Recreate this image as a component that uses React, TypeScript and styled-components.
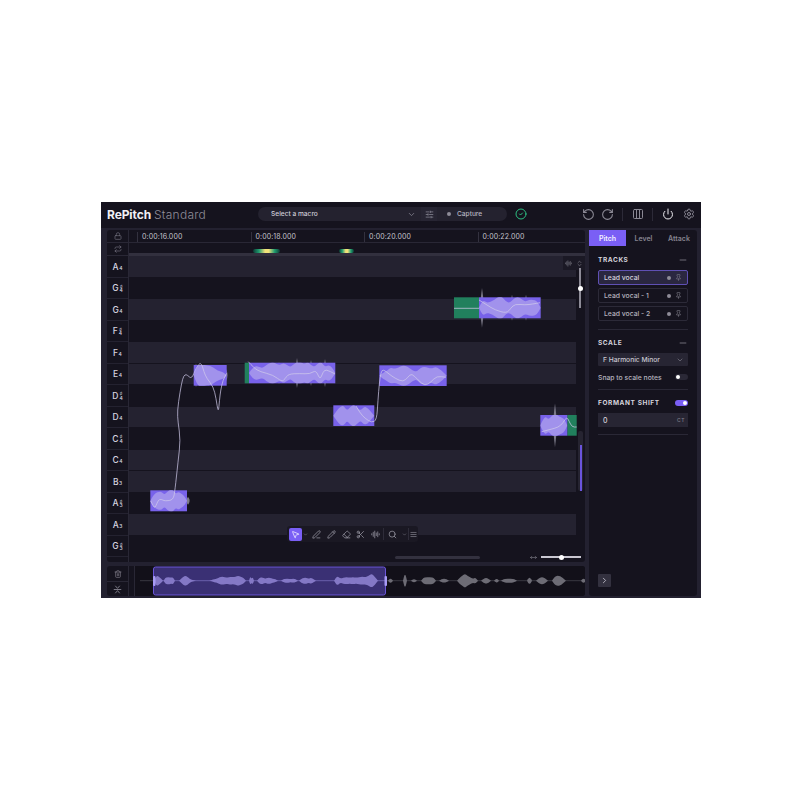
import React from "react";
import styled, { createGlobalStyle } from "styled-components";
import {
  ChevronDown,
  ChevronRight,
  CircleCheck,
  Columns3,
  Eraser,
  Lock,
  Minus,
  MousePointer2,
  MoveHorizontal,
  Pencil,
  PenLine,
  Pin,
  Power,
  Repeat,
  RotateCcw,
  RotateCw,
  Scissors,
  Search,
  Settings,
  SlidersHorizontal,
  Trash2,
  AudioLines,
  ChevronsUpDown,
  AlignJustify,
} from "lucide-react";

const GlobalStyle = createGlobalStyle`
  html, body {
    margin: 0;
    background: #ffffff;
    font-family: Inter, "Liberation Sans", sans-serif;
  }
  * { box-sizing: border-box; }
`;

const Page = styled.div`
  width: 800px;
  height: 800px;
  padding: 202px 99px 202px 101px;
`;

const Window = styled.div`
  width: 600px;
  height: 396px;
  display: grid;
  grid-template-rows: 26px 1fr;
  background: #232130;
  color: #d9d7e2;
  overflow: hidden;
`;

const Header = styled.header`
  display: flex;
  align-items: center;
  background: #15131e;
  padding: 0 6px 2px;
`;

const Logo = styled.div`
  width: 151px;
  display: flex;
  gap: 3px;
  font-size: 12px;
  letter-spacing: -0.1px;
  white-space: nowrap;
`;

const LogoBold = styled.span`
  font-weight: 700;
  color: #f1f0f4;
`;

const LogoLight = styled.span`
  font-weight: 300;
  color: #8f8d99;
  letter-spacing: 0.25px;
`;

const MacroBar = styled.div`
  width: 249px;
  height: 14px;
  display: flex;
  align-items: center;
  background: #24222f;
  border-radius: 7px;
  overflow: hidden;
  font-size: 6.6px;
  font-weight: 500;
`;

const MacroSelect = styled.div`
  width: 163px;
  height: 100%;
  display: flex;
  align-items: center;
  justify-content: space-between;
  padding: 0 5px 0 13px;
  color: #cfcdd8;
  svg { color: #8a8895; }
`;

const MacroIcon = styled.div`
  width: 16px;
  height: 100%;
  display: flex;
  align-items: center;
  justify-content: center;
  background: #272533;
  color: #8a8895;
`;

const CaptureBox = styled.div`
  flex: 1;
  display: flex;
  align-items: center;
  gap: 6px;
  padding-left: 10px;
  color: #b7b5c1;
`;

const Dot = styled.span`
  width: 4px;
  height: 4px;
  border-radius: 50%;
  background: #8e8c98;
  flex: none;
`;

const Status = styled.div`
  margin-left: 8px;
  display: flex;
  color: #2fd08c;
`;

const HeaderTools = styled.div`
  margin-left: auto;
  display: flex;
  align-items: center;
  height: 100%;
`;

const HeaderTool = styled.div<{ $w: number; $light?: boolean; $after?: number }>`
  width: ${(p) => p.$w}px;
  margin-right: ${(p) => p.$after ?? 0}px;
  display: flex;
  justify-content: center;
  color: ${(p) => (p.$light ? "#f2f1f5" : "#8b8995")};
`;

const HeaderDivider = styled.div`
  width: 1px;
  height: 13px;
  background: #2c2a38;
`;

const Main = styled.div`
  display: grid;
  grid-template-columns: 478px 108px;
  gap: 4px;
  padding: 2px 4px 2px 6px;
  min-height: 0;
`;

const LeftColumn = styled.div`
  display: grid;
  grid-template-rows: 332px 30px;
  gap: 4px;
`;

const Editor = styled.section`
  display: grid;
  grid-template-columns: 22px 1fr;
  background: #15131e;
  border-radius: 3px;
  overflow: hidden;
`;

const KeyColumn = styled.div`
  display: flex;
  flex-direction: column;
  border-right: 1px solid #292735;
`;

const SmallCell = styled.div<{ $h: number }>`
  height: ${(p) => p.$h}px;
  flex: none;
  display: flex;
  align-items: center;
  justify-content: center;
  color: #73717e;
  border-bottom: 1px solid #292735;
`;

const KeyList = styled.div`
  height: 301px;
  display: grid;
  grid-template-rows: repeat(14, 1fr);
`;

const Key = styled.div`
  display: flex;
  align-items: center;
  justify-content: center;
  padding-top: 1px;
  font-size: 8.5px;
  font-weight: 500;
  color: #d8d6e0;
  border-bottom: 1px solid #242230;
`;

const Octave = styled.span`
  font-size: 5px;
  margin: 3px 0 0 0.5px;
  line-height: 5px;
`;

const Accidental = styled.span`
  display: inline-flex;
  flex-direction: column;
  align-items: center;
  margin-left: 1px;
  font-size: 5px;
  line-height: 4.5px;
`;

const Timeline = styled.div`
  display: flex;
  flex-direction: column;
  min-width: 0;
  position: relative;
`;

const Ruler = styled.div`
  height: 13px;
  flex: none;
  display: flex;
  padding: 2px 0 0 8px;
  border-bottom: 1px solid #292735;
`;

const Tick = styled.div`
  width: 113.5px;
  flex: none;
  padding-left: 4px;
  border-left: 1px solid #33313f;
  font-size: 7px;
  line-height: 10px;
  font-weight: 400;
  letter-spacing: 0.1px;
  color: #c4c2cc;
`;

const HeatLane = styled.div`
  height: 10px;
  flex: none;
  position: relative;
`;

const Heat = styled.span<{ $left: number; $width: number }>`
  position: absolute;
  left: ${(p) => p.$left}px;
  width: ${(p) => p.$width}px;
  top: 6px;
  height: 3.5px;
  border-radius: 2px;
  background: linear-gradient(90deg, #0e3a34, #1f9c70 22%, #f2e27a 45%, #f2e27a 58%, #1f9c70 80%, #0e3a34);
`;

const LaneBand = styled.div`
  height: 3px;
  flex: none;
  background: #32303e;
`;

const Grid = styled.div`
  height: 301px;
  flex: none;
  position: relative;
  display: grid;
  grid-template-rows: repeat(14, 1fr);
  padding-right: 9px;
`;

const Row = styled.div<{ $light: boolean }>`
  background: ${(p) => (p.$light ? "#242230" : "#15131e")};
  margin-bottom: 1px;
`;

const Roll = styled.svg`
  position: absolute;
  left: 0;
  top: 0;
  overflow: visible;
`;

const ViewBadge = styled.div`
  position: absolute;
  top: 0;
  right: 0;
  width: 22px;
  height: 14px;
  display: flex;
  align-items: center;
  justify-content: space-around;
  background: #1b1925;
  color: #85838f;
`;

const ZoomRail = styled.div`
  position: absolute;
  top: 12px;
  right: 4px;
  width: 2px;
  height: 40px;
  background: #8d8b97;
`;

const RailKnob = styled.span`
  position: absolute;
  left: -1.5px;
  top: 17.5px;
  width: 5px;
  height: 5px;
  border-radius: 50%;
  background: #ffffff;
`;

const ScrollTrack = styled.div`
  position: absolute;
  top: 175px;
  right: 2px;
  width: 5px;
  height: 60px;
  background: #262431;
  border-radius: 2px;
`;

const ScrollThumb = styled.div`
  position: absolute;
  bottom: 0;
  left: 1.5px;
  width: 2px;
  height: 46px;
  background: #6a54dc;
`;

const Toolbar = styled.div`
  position: absolute;
  left: 158px;
  top: 270px;
  width: 131px;
  height: 16px;
  display: flex;
  align-items: center;
  padding-left: 2px;
  background: #1a1823;
  border-radius: 3px;
  color: #9a98a4;
`;

const ToolActive = styled.div`
  width: 13px;
  height: 13px;
  border-radius: 2px;
  background: #7a5ff5;
  color: #f4f2ff;
  display: flex;
  align-items: center;
  justify-content: center;
`;

const ToolSlot = styled.div<{ $w: number }>`
  width: ${(p) => p.$w}px;
  flex: none;
  display: flex;
  justify-content: center;
`;

const ToolDivider = styled.div`
  width: 1px;
  height: 12px;
  background: #2e2c39;
  flex: none;
`;

const BottomBar = styled.div`
  position: absolute;
  left: 0;
  right: 0;
  bottom: -4px;
  height: 8px;
  display: flex;
  align-items: center;
`;

const HScroll = styled.div`
  margin-left: 266px;
  width: 85px;
  height: 3px;
  border-radius: 2px;
  background: #33313f;
`;

const ZoomIcon = styled.div`
  margin-left: 50px;
  display: flex;
  color: #85838f;
`;

const ZoomSlider = styled.div`
  margin-left: 4px;
  width: 40px;
  height: 2px;
  position: relative;
  background: #c9c7d1;
`;

const SliderKnob = styled.span`
  position: absolute;
  left: 18px;
  top: -1.5px;
  width: 5px;
  height: 5px;
  border-radius: 50%;
  background: #ffffff;
`;

const Overview = styled.section`
  display: grid;
  grid-template-columns: 22px 1fr;
  background: #15131e;
  border-radius: 3px;
  overflow: hidden;
`;

const OverviewButtons = styled.div`
  display: grid;
  grid-template-rows: 1fr 1fr;
  border-right: 1px solid #292735;
`;

const OverviewButton = styled.div`
  display: flex;
  align-items: center;
  justify-content: center;
  color: #83818d;
  & + & { border-top: 1px solid #292735; }
`;

const OverviewTrack = styled.div`
  position: relative;
  margin-left: 5px;
  background: #121019;
  border-left: 1px solid #292735;
`;

const Panel = styled.aside`
  background: #15131e;
  border-radius: 3px;
  display: flex;
  flex-direction: column;
  padding-bottom: 9px;
`;

const Tabs = styled.div`
  display: grid;
  grid-template-columns: 37px 35px 36px;
  height: 16px;
  flex: none;
  margin-bottom: 1px;
`;

const Tab = styled.div<{ $active?: boolean }>`
  display: flex;
  align-items: center;
  justify-content: center;
  font-size: 7px;
  font-weight: 600;
  color: ${(p) => (p.$active ? "#f4f2ff" : "#85838f")};
  background: ${(p) => (p.$active ? "#7a5ff5" : "transparent")};
`;

const Section = styled.div`
  margin: 0 9px;
  padding: 8px 0 7px;
  border-bottom: 1px solid #2a2836;
  display: flex;
  flex-direction: column;
`;

const SectionHead = styled.div`
  display: flex;
  align-items: center;
  justify-content: space-between;
  height: 9px;
  font-size: 6.5px;
  font-weight: 700;
  letter-spacing: 0.6px;
  color: #d5d3dd;
  margin-bottom: 6px;
  svg { color: #7f7d89; }
`;

const TrackRow = styled.div<{ $active?: boolean }>`
  height: 15px;
  margin-bottom: 3px;
  display: flex;
  align-items: center;
  padding: 0 5px;
  border-radius: 2px;
  font-size: 6.8px;
  font-weight: 500;
  color: ${(p) => (p.$active ? "#d5d3dd" : "#b5b3be")};
  background: ${(p) => (p.$active ? "#2a2740" : "transparent")};
  border: 1px solid ${(p) => (p.$active ? "#5f50b4" : "#2c2a38")};
  svg { color: #85838f; margin-left: 4px; }
  &:last-child { margin-bottom: 1px; }
`;

const TrackName = styled.span`
  flex: 1;
`;

const SelectBox = styled.div`
  height: 13px;
  display: flex;
  align-items: center;
  justify-content: space-between;
  padding: 0 4px 0 5px;
  background: #272533;
  border-radius: 1px;
  font-size: 6.7px;
  font-weight: 500;
  color: #c9c7d1;
  svg { color: #7f7d89; }
`;

const SwitchRow = styled.div`
  display: flex;
  align-items: center;
  justify-content: space-between;
  margin-top: 6px;
  height: 10px;
  font-size: 6.8px;
  font-weight: 500;
  color: #b5b3be;
`;

const Switch = styled.span<{ $on?: boolean }>`
  width: 13px;
  height: 6px;
  border-radius: 3px;
  position: relative;
  background: ${(p) => (p.$on ? "#7a5ff5" : "#2a2836")};
  &::after {
    content: "";
    position: absolute;
    top: 1px;
    left: ${(p) => (p.$on ? "8px" : "1px")};
    width: 4px;
    height: 4px;
    border-radius: 50%;
    background: #ffffff;
  }
`;

const ValueBox = styled.div`
  height: 14px;
  display: flex;
  align-items: center;
  justify-content: space-between;
  padding: 0 3px 0 5px;
  background: #272533;
  font-size: 7px;
  font-weight: 500;
  color: #d5d3dd;
`;

const Unit = styled.span`
  font-size: 5px;
  letter-spacing: 0.5px;
  color: #7f7d89;
`;

const PanelFoot = styled.div`
  margin: auto 0 0 9px;
  width: 13px;
  height: 13px;
  display: flex;
  align-items: center;
  justify-content: center;
  background: #33313f;
  color: #d5d3dd;
  border-radius: 1px;
`;

// smooth closed shape, mirrored around the mid line
function blob(x0: number, x1: number, mid: number, amps: number[]) {
  const step = (x1 - x0) / (amps.length + 1);
  const pts = [[x0, 0], ...amps.map((a, i) => [x0 + step * (i + 1), a]), [x1, 0]];
  const side = (sign: number, list: number[][]) => {
    let d = "";
    for (let i = 1; i < list.length; i++) {
      const [px, pa] = list[i - 1];
      const [cx, ca] = list[i];
      d += ` Q${px.toFixed(1)} ${(mid + sign * pa).toFixed(1)} ${((px + cx) / 2).toFixed(1)} ${(mid + sign * (pa + ca) / 2).toFixed(1)}`;
    }
    const last = list[list.length - 1];
    return d + ` L${last[0].toFixed(1)} ${(mid + sign * last[1]).toFixed(1)}`;
  };
  return `M${x0} ${mid}${side(-1, pts)}${side(1, [...pts].reverse())}Z`;
}

function smooth(points: number[][]) {
  let d = `M${points[0][0]} ${points[0][1]}`;
  for (let i = 1; i < points.length - 1; i++) {
    const mx = (points[i][0] + points[i + 1][0]) / 2;
    const my = (points[i][1] + points[i + 1][1]) / 2;
    d += ` Q${points[i][0]} ${points[i][1]} ${mx} ${my}`;
  }
  const last = points[points.length - 1];
  return d + ` L${last[0]} ${last[1]}`;
}

function spike(x: number, mid: number, half: number) {
  return `M${x} ${mid - half} Q${x + 3.2} ${mid} ${x} ${mid + half} Q${x - 3.2} ${mid} ${x} ${mid - half}Z`;
}

type NoteData = {
  x: number;
  y: number;
  w: number;
  h: number;
  amps: number[];
  spikes?: number[][];
  green?: number[];
};

const NOTES: NoteData[] = [
  { x: 150.3, y: 490.3, w: 36.7, h: 21, amps: [5, 8, 9, 9, 6, 9, 11, 11, 7, 9, 7, 5], spikes: [[188, 4]] },
  { x: 193.7, y: 365, w: 33, h: 20.7, amps: [8, 11, 11, 10, 10, 9, 7, 5, 4, 3], spikes: [[196, 12], [226, 6]] },
  {
    x: 249,
    y: 362.7,
    w: 86.3,
    h: 20.6,
    amps: [5, 7, 6, 5, 8, 10, 11, 9, 8, 10, 8, 6, 9, 11, 11, 9, 11, 8, 6, 10, 11, 6, 8, 6],
    spikes: [[279, 11], [297, 15], [311, 13], [325, 14]],
    green: [244.7, 4.3],
  },
  { x: 333.3, y: 405.3, w: 41, h: 20.7, amps: [5, 9, 10, 5, 9, 11, 8, 5, 9, 8, 4] },
  { x: 379.3, y: 365.3, w: 67.4, h: 20.7, amps: [3, 5, 8, 7, 8, 10, 10, 8, 5, 4, 8, 9, 8, 7, 9, 7, 4] },
  {
    x: 479,
    y: 297.3,
    w: 61.7,
    h: 21,
    amps: [8, 5, 6, 8, 11, 11, 6, 5, 9, 11, 9, 6, 8, 8, 7],
    spikes: [[482, 20], [512, 13], [526, 13]],
    green: [454, 25],
  },
  { x: 540.3, y: 415, w: 27, h: 20.7, amps: [6, 9, 6, 9, 11, 11, 9, 8, 6], spikes: [[555, 22]], green: [567.3, 9.4] },
];

const CURVES: number[][][] = [
  [
    [150.7, 501], [153, 506], [155, 508], [157, 503], [159.3, 499], [163, 500], [165, 501], [173.3, 500], [175, 490],
    [178, 462], [180.5, 440], [178, 422], [177.3, 411], [180, 392], [182.7, 378], [185, 374.5], [187.3, 375],
    [191.7, 379], [196, 368], [201, 361.7], [204, 372], [206.7, 378.3], [213.3, 386.7], [216, 398], [218.3, 413.3],
    [219.5, 400], [220.7, 390], [223, 380], [226.7, 373.3],
  ],
  [
    [248.3, 361.7], [254, 368], [260, 371.7], [273.3, 375], [281.7, 381.7], [285, 379], [288.3, 374], [300, 373.5],
    [310, 374], [316, 370], [320, 380], [323, 372], [326, 369.3], [335, 374],
  ],
  [
    [356, 406], [360, 413], [365, 418.3], [371.7, 422.7], [376.7, 420], [378, 400], [379.3, 383.3], [381, 372], [383.3, 369.3],
    [389, 374], [395, 378.3], [403.3, 382], [408, 377], [411.7, 373.3], [418, 380], [425, 386], [431, 382], [436.7, 376], [446, 377.3],
  ],
  [[454, 308.3], [479, 308.3]],
  [[479, 300], [487, 305], [495, 310], [506.7, 313.3], [511, 308], [515, 304], [525, 305], [533, 304], [540, 302.7]],
  [[541.7, 431.7], [550, 429.5], [558.3, 427.3], [563, 423], [566.7, 416.7], [569, 421], [572, 427], [576.7, 427]],
];

function Note({ note }: { note: NoteData }) {
  const mid = note.y + note.h / 2;
  const clipId = `note-${Math.round(note.x)}`;
  return (
    <g>
      {note.spikes?.map(([x, half]) => (
        <path key={x} d={spike(x, mid, half)} fill="#7c7a88" />
      ))}
      {note.green && <rect x={note.green[0]} y={note.y} width={note.green[1]} height={note.h} fill="#21805d" />}
      <rect x={note.x} y={note.y} width={note.w} height={note.h} fill="#7862ea" />
      <clipPath id={clipId}>
        <rect x={note.x} y={note.y} width={note.w} height={note.h} />
      </clipPath>
      <path clipPath={`url(#${clipId})`} d={blob(note.x, note.x + note.w, mid, note.amps)} fill="#a192ec" />
    </g>
  );
}

const WAVE: [number, number, number[]][] = [
  [153, 162, [4, 5, 3.5, 2]],
  [162.5, 174, [3, 3.5, 3.5, 3, 3.5]],
  [178, 195, [2, 4, 5, 4, 2, 1, 0.7]],
  [208, 245, [0.7, 1.5, 2, 3.5, 4, 3.5, 3, 4, 3.5, 4, 5, 4, 3]],
  [248, 253, [4, 2, 3.5]],
  [256, 277, [3, 3.5, 2, 3, 3, 2, 1.5]],
  [280, 297, [1.5, 2, 2, 1.5, 2, 1.5]],
  [298, 315, [2, 3, 3, 2, 3, 1.5]],
  [333, 377, [5, 2, 3, 3.5, 3, 3.5, 3, 3.5, 4, 3.5, 5, 7, 4]],
  [387, 392, [2, 2]],
  [402, 406, [6, 6]],
  [410, 416, [1.5, 1.5]],
  [420, 435, [3, 3.5, 3.5, 3.5, 3]],
  [438, 448, [1.5, 2, 1.5]],
  [456, 477, [3, 5, 7, 5, 3.5, 2, 3]],
  [480, 490, [2, 3, 2]],
  [493, 498, [1.5, 2]],
  [500, 516, [1.5, 2, 2, 2, 1.5]],
  [526, 531, [3, 3]],
  [535, 547, [2, 3.5, 3.5, 2]],
  [551, 565, [3.5, 5, 5, 4, 2]],
  [580, 585, [2, 2]],
];

const NOTE_ROWS = [
  { name: "A", oct: "4", light: true },
  { name: "G", oct: "4", sharp: true, light: false },
  { name: "G", oct: "4", light: true },
  { name: "F", oct: "4", sharp: true, light: false },
  { name: "F", oct: "4", light: true },
  { name: "E", oct: "4", light: true },
  { name: "D", oct: "4", sharp: true, light: false },
  { name: "D", oct: "4", light: true },
  { name: "C", oct: "4", sharp: true, light: false },
  { name: "C", oct: "4", light: true },
  { name: "B", oct: "3", light: true },
  { name: "A", oct: "3", sharp: true, light: false },
  { name: "A", oct: "3", light: true },
  { name: "G", oct: "3", sharp: true, light: false },
];

const TICKS = ["0:00:16.000", "0:00:18.000", "0:00:20.000", "0:00:22.000"];
const TRACKS = ["Lead vocal", "Lead vocal - 1", "Lead vocal - 2"];

function SplitIcon() {
  return (
    <svg width="9" height="9" viewBox="0 0 12 12" fill="none" stroke="currentColor" strokeWidth="1.2">
      <path d="M1 6h10M3 1l3 3.5L9 1M3 11l3-3.5L9 11" />
    </svg>
  );
}

export default function App() {
  return (
    <Page>
      <GlobalStyle />
      <Window>
        <Header>
          <Logo>
            <LogoBold>RePitch</LogoBold>
            <LogoLight>Standard</LogoLight>
          </Logo>
          <MacroBar>
            <MacroSelect>
              Select a macro
              <ChevronDown size={9} />
            </MacroSelect>
            <MacroIcon>
              <SlidersHorizontal size={9} />
            </MacroIcon>
            <CaptureBox>
              <Dot />
              Capture
            </CaptureBox>
          </MacroBar>
          <Status>
            <CircleCheck size={12} strokeWidth={1.8} />
          </Status>
          <HeaderTools>
            <HeaderTool $w={19}><RotateCcw size={13} /></HeaderTool>
            <HeaderTool $w={19} $after={5.5}><RotateCw size={13} /></HeaderTool>
            <HeaderDivider />
            <HeaderTool $w={29}><Columns3 size={12} /></HeaderTool>
            <HeaderDivider />
            <HeaderTool $w={29} $light><Power size={12} /></HeaderTool>
            <HeaderTool $w={13}><Settings size={12} /></HeaderTool>
          </HeaderTools>
        </Header>
        <Main>
          <LeftColumn>
            <Editor>
              <KeyColumn>
                <SmallCell $h={13}><Lock size={8} /></SmallCell>
                <SmallCell $h={13}><Repeat size={8} /></SmallCell>
                <KeyList>
                  {NOTE_ROWS.map((row, i) => (
                    <Key key={i}>
                      {row.name}
                      {row.sharp ? (
                        <Accidental>
                          <span>♯</span>
                          <span>{row.oct}</span>
                        </Accidental>
                      ) : (
                        <Octave>{row.oct}</Octave>
                      )}
                    </Key>
                  ))}
                </KeyList>
              </KeyColumn>
              <Timeline>
                <Ruler>
                  {TICKS.map((t) => (
                    <Tick key={t}>{t}</Tick>
                  ))}
                </Ruler>
                <HeatLane>
                  <Heat $left={124} $width={27} />
                  <Heat $left={210} $width={15} />
                </HeatLane>
                <LaneBand />
                <Grid>
                  {NOTE_ROWS.map((row, i) => (
                    <Row key={i} $light={row.light} />
                  ))}
                  <Roll width="456" height="301" viewBox="129 256 456 301">
                    {NOTES.map((n) => (
                      <Note key={n.x} note={n} />
                    ))}
                    {CURVES.map((c, i) => (
                      <path key={i} d={smooth(c)} fill="none" stroke="#cfcaea" strokeWidth="0.8" opacity="0.9" />
                    ))}
                  </Roll>
                  <ViewBadge>
                    <AudioLines size={7} />
                    <ChevronsUpDown size={7} />
                  </ViewBadge>
                  <ZoomRail>
                    <RailKnob />
                  </ZoomRail>
                  <ScrollTrack>
                    <ScrollThumb />
                  </ScrollTrack>
                  <Toolbar>
                    <ToolActive><MousePointer2 size={9} /></ToolActive>
                    <ToolSlot $w={7}><ChevronDown size={5} /></ToolSlot>
                    <ToolSlot $w={15}><PenLine size={9} /></ToolSlot>
                    <ToolSlot $w={15}><Pencil size={9} /></ToolSlot>
                    <ToolSlot $w={14}><Eraser size={9} /></ToolSlot>
                    <ToolSlot $w={15}><Scissors size={9} /></ToolSlot>
                    <ToolSlot $w={15}><AudioLines size={9} /></ToolSlot>
                    <ToolDivider />
                    <ToolSlot $w={17}><Search size={9} /></ToolSlot>
                    <ToolSlot $w={7}><ChevronDown size={5} /></ToolSlot>
                    <ToolDivider />
                    <ToolSlot $w={9}><AlignJustify size={7} /></ToolSlot>
                  </Toolbar>
                  <BottomBar>
                    <HScroll />
                    <ZoomIcon><MoveHorizontal size={7} /></ZoomIcon>
                    <ZoomSlider>
                      <SliderKnob />
                    </ZoomSlider>
                  </BottomBar>
                </Grid>
              </Timeline>
            </Editor>
            <Overview>
              <OverviewButtons>
                <OverviewButton><Trash2 size={8} /></OverviewButton>
                <OverviewButton><SplitIcon /></OverviewButton>
              </OverviewButtons>
              <OverviewTrack>
                <svg width="451" height="30" viewBox="134 566 451 30" style={{ display: "block" }}>
                  <line x1="139" x2="585" y1="580.7" y2="580.7" stroke="#4a4954" strokeWidth="0.7" />
                  <rect x="152.5" y="567" width="232" height="28" rx="2" fill="#3a3074" stroke="#6a56d8" />
                  <line x1="153" x2="385" y1="580.7" y2="580.7" stroke="#7e72c4" strokeWidth="0.7" />
                  {WAVE.map(([x0, x1, amps]) => (
                    <path key={x0} d={blob(x0, x1, 580.7, amps)} fill={x1 < 385 ? "#8478c6" : "#6d6c75"} />
                  ))}
                  <rect x="152" y="576" width="2.5" height="10" rx="1" fill="#a89bf5" />
                  <rect x="383.5" y="576" width="2.5" height="10" rx="1" fill="#a89bf5" />
                </svg>
              </OverviewTrack>
            </Overview>
          </LeftColumn>
          <Panel>
            <Tabs>
              <Tab $active>Pitch</Tab>
              <Tab>Level</Tab>
              <Tab>Attack</Tab>
            </Tabs>
            <Section>
              <SectionHead>
                TRACKS
                <Minus size={10} />
              </SectionHead>
              {TRACKS.map((t, i) => (
                <TrackRow key={t} $active={i === 0}>
                  <TrackName>{t}</TrackName>
                  <Dot />
                  <Pin size={7} />
                </TrackRow>
              ))}
            </Section>
            <Section>
              <SectionHead>
                SCALE
                <Minus size={10} />
              </SectionHead>
              <SelectBox>
                F Harmonic Minor
                <ChevronDown size={8} />
              </SelectBox>
              <SwitchRow>
                Snap to scale notes
                <Switch />
              </SwitchRow>
            </Section>
            <Section>
              <SectionHead>
                FORMANT SHIFT
                <Switch $on />
              </SectionHead>
              <ValueBox>
                0
                <Unit>CT</Unit>
              </ValueBox>
            </Section>
            <PanelFoot>
              <ChevronRight size={9} />
            </PanelFoot>
          </Panel>
        </Main>
      </Window>
    </Page>
  );
}
